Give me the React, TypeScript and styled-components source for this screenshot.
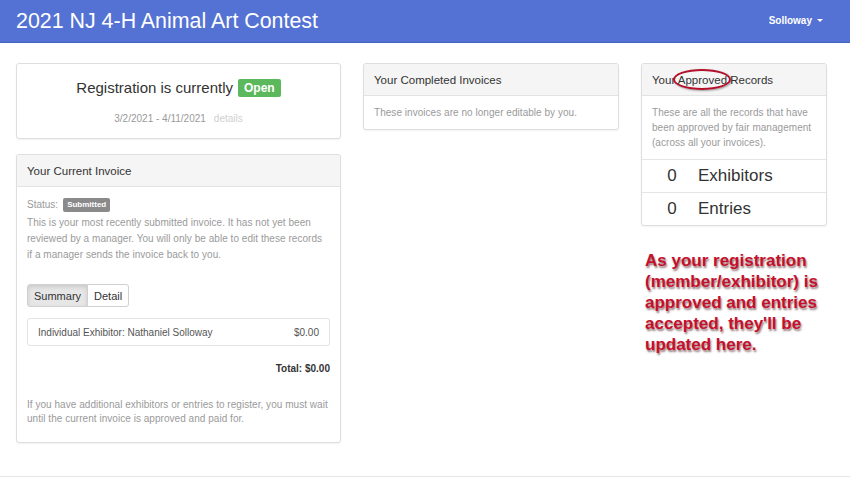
import React from "react";
import styled, { createGlobalStyle } from "styled-components";

const Global = createGlobalStyle`
  html, body { margin: 0; padding: 0; background: #fff; }
  body { font-family: "Liberation Sans", Arial, sans-serif; color: #333; }
  * { box-sizing: border-box; }
`;

const Page = styled.div`
  width: 850px;
  height: 478px;
  overflow: hidden;
  position: relative;
`;

const Header = styled.header`
  height: 43px;
  background: #5472d3;
  border-bottom: 1px solid #4663c4;
  display: flex;
  align-items: center;
  justify-content: space-between;
  padding: 0 27px 0 16px;
`;

const Title = styled.h1`
  margin: 0;
  font-size: 21.4px;
  font-weight: normal;
  color: #fff;
`;

const UserMenu = styled.div`
  display: flex;
  align-items: center;
  gap: 5px;
  color: #fff;
  font-size: 10px;
  font-weight: bold;
  margin-top: -2px;
`;

const Caret = styled.span`
  width: 0;
  height: 0;
  border-left: 3px solid transparent;
  border-right: 3px solid transparent;
  border-top: 3px solid #fff;
`;

const Main = styled.main`
  display: grid;
  grid-template-columns: 325px 256px 186px;
  column-gap: 22px;
  padding: 20px 0 0 16px;
  align-items: start;
`;

const Column = styled.div`
  display: flex;
  flex-direction: column;
  gap: 15px;
`;

const Panel = styled.section`
  border: 1px solid #dedede;
  border-radius: 3px;
  background: #fff;
  box-shadow: 0 1px 2px rgba(0, 0, 0, 0.06);
  position: relative;
`;

const PanelHeading = styled.div`
  height: 32px;
  background: #f5f5f5;
  border-bottom: 1px solid #e3e3e3;
  border-radius: 3px 3px 0 0;
  padding: 0 10px;
  display: flex;
  align-items: center;
  font-size: 11.5px;
  color: #333;
  position: relative;
`;

const PanelBody = styled.div<{ $pt?: number; $pb?: number }>`
  padding: ${(p) => p.$pt ?? 10}px 10px ${(p) => p.$pb ?? 10}px;
`;

const Muted = styled.p<{ $lh?: number }>`
  margin: 0;
  font-size: 10px;
  letter-spacing: 0.04px;
  line-height: ${(p) => p.$lh ?? 16}px;
  color: #9a9a9a;
`;

const Intro = styled(Muted)`
  margin-top: 2px;
  padding-right: 5px;
`;

const RegBody = styled.div`
  padding: 13px 10px 13px;
  display: flex;
  flex-direction: column;
  align-items: center;
  gap: 14px;
`;

const RegLine = styled.div`
  display: flex;
  align-items: center;
  gap: 5px;
  font-size: 15px;
  color: #333;
  line-height: 22px;
`;

const Badge = styled.span<{ $bg: string; $size: number; $pad: string }>`
  display: inline-block;
  background: ${(p) => p.$bg};
  color: #fff;
  font-weight: bold;
  font-size: ${(p) => p.$size}px;
  padding: ${(p) => p.$pad};
  border-radius: 2px;
  line-height: 1.2;
`;

const DateLine = styled.div`
  font-size: 10px;
  line-height: 12px;
  color: #9a9a9a;
  display: flex;
  gap: 8px;
`;

const Details = styled.span`
  color: #cfcfcf;
`;

const StatusLine = styled.div`
  display: flex;
  align-items: center;
  gap: 5px;
  font-size: 10px;
  line-height: 16px;
  color: #9a9a9a;
`;

const BtnGroup = styled.div`
  display: inline-flex;
  margin-top: 21px;
`;

const Btn = styled.button<{ $active?: boolean }>`
  font-family: inherit;
  font-size: 11px;
  color: #333;
  height: 23px;
  padding: 0 6px;
  border: 1px solid #d0d0d0;
  background: ${(p) => (p.$active ? "#e6e6e6" : "#fff")};
  box-shadow: ${(p) => (p.$active ? "inset 0 2px 4px rgba(0,0,0,0.12)" : "none")};
  border-radius: ${(p) => (p.$active ? "3px 0 0 3px" : "0 3px 3px 0")};
  margin-left: ${(p) => (p.$active ? "0" : "-1px")};
`;

const ListItem = styled.div`
  margin-top: 11px;
  height: 28px;
  border: 1px solid #e3e3e3;
  border-radius: 3px;
  display: flex;
  align-items: center;
  justify-content: space-between;
  padding: 0 10px;
  font-size: 10px;
  color: #555;
`;

const Total = styled.div`
  margin-top: 16px;
  text-align: right;
  font-size: 10px;
  line-height: 14px;
  font-weight: bold;
  color: #333;
`;

const Note = styled(Muted)`
  margin-top: 22px;
  margin-bottom: 6px;
`;

const StatRow = styled.div`
  height: 33px;
  border-top: 1px solid #e6e6e6;
  display: flex;
  align-items: center;
  padding-left: 10px;
  font-size: 17px;
  color: #333;
`;

const StatNum = styled.span`
  width: 40px;
  text-align: center;
  margin-right: 6px;
`;

const Annotation = styled.p`
  margin: 9px 0 0 4px;
  font-size: 17px;
  line-height: 21px;
  font-weight: bold;
  color: #c4102c;
  text-shadow: 1px 2px 2px rgba(60, 0, 10, 0.55);
`;

const Circle = styled.span`
  position: absolute;
  left: 31px;
  top: 5px;
  width: 58px;
  height: 21px;
  border: 2px solid #b3102b;
  border-radius: 50%;
  box-shadow: 1px 1px 2px rgba(0, 0, 0, 0.35);
`;

const Footer = styled.div`
  position: absolute;
  left: 0;
  right: 0;
  top: 476px;
  border-top: 1px solid #e6e6e6;
`;

export default function App() {
  return (
    <Page>
      <Global />
      <Header>
        <Title>2021 NJ 4-H Animal Art Contest</Title>
        <UserMenu>
          Solloway <Caret />
        </UserMenu>
      </Header>
      <Main>
        <Column>
          <Panel>
            <RegBody>
              <RegLine>
                Registration is currently
                <Badge $bg="#5cb85c" $size={12} $pad="2px 6px">Open</Badge>
              </RegLine>
              <DateLine>
                <span>3/2/2021 - 4/11/2021</span>
                <Details>details</Details>
              </DateLine>
            </RegBody>
          </Panel>
          <Panel>
            <PanelHeading>Your Current Invoice</PanelHeading>
            <PanelBody $pb={10}>
              <StatusLine>
                Status:
                <Badge $bg="#8a8a8a" $size={8} $pad="2px 4px">Submitted</Badge>
              </StatusLine>
              <Intro>
                This is your most recently submitted invoice. It has not yet been reviewed by a manager. You
                will only be able to edit these records if a manager sends the invoice back to you.
              </Intro>
              <BtnGroup>
                <Btn $active>Summary</Btn>
                <Btn>Detail</Btn>
              </BtnGroup>
              <ListItem>
                <span>Individual Exhibitor: Nathaniel Solloway</span>
                <span>$0.00</span>
              </ListItem>
              <Total>Total: $0.00</Total>
              <Note $lh={14}>
                If you have additional exhibitors or entries to register, you must wait until the current
                invoice is approved and paid for.
              </Note>
            </PanelBody>
          </Panel>
        </Column>
        <Column>
          <Panel>
            <PanelHeading>Your Completed Invoices</PanelHeading>
            <PanelBody $pt={9} $pb={9}>
              <Muted $lh={15}>These invoices are no longer editable by you.</Muted>
            </PanelBody>
          </Panel>
        </Column>
        <Column>
          <Panel>
            <PanelHeading>
              Your Approved Records
              <Circle />
            </PanelHeading>
            <PanelBody $pt={9} $pb={9}>
              <Muted $lh={15}>
                These are all the records that have been approved by fair management (across all your
                invoices).
              </Muted>
            </PanelBody>
            <StatRow>
              <StatNum>0</StatNum>Exhibitors
            </StatRow>
            <StatRow>
              <StatNum>0</StatNum>Entries
            </StatRow>
          </Panel>
          <Annotation>
            As your registration (member/exhibitor) is approved and entries accepted, they'll be updated
            here.
          </Annotation>
        </Column>
      </Main>
      <Footer />
    </Page>
  );
}
